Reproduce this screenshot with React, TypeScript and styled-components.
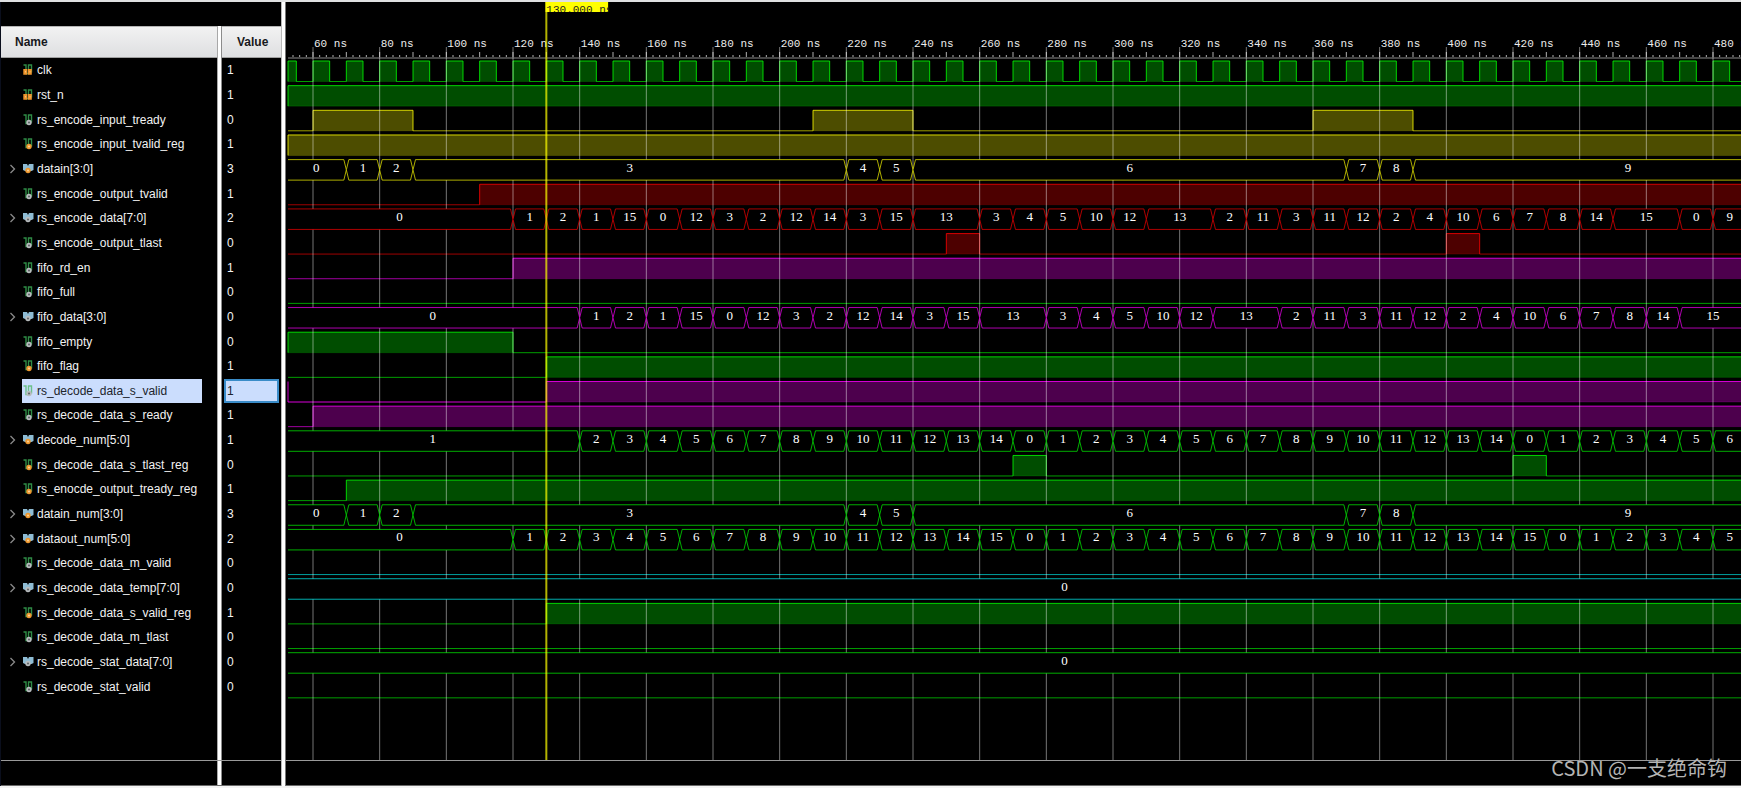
import React from "react";
import styled, { createGlobalStyle, css } from "styled-components";

const Global = createGlobalStyle`
  * { box-sizing: border-box; }
  body { margin: 0; background: #000; }
`;

/* ---------- signal data ---------- */

type Kind = "input" | "net" | "reg" | "busNet" | "busReg";
type Segment = [until: number, label: string];
type Signal = {
  name: string;
  value: string;
  kind: Kind;
  color: string;
  selected?: boolean;
  high?: [number, number][];
  bus?: Segment[];
};

const T_START = 52;
const T_END = 519;

const GREEN = "0,255,0";
const YELLOW = "255,255,0";
const RED = "255,0,0";
const MAGENTA = "255,0,255";
const CYAN = "0,255,255";

/* Consecutive 10 ns values; a repeated value is merged into one longer segment. */
const steps = (first: string, from: number, values: string): Segment[] => {
  const out: Segment[] = [[from, first]];
  let t = from;
  values.split(" ").forEach((v) => {
    t += 10;
    if (out[out.length - 1][1] === v) out[out.length - 1][0] = t;
    else out.push([t, v]);
  });
  return out;
};

const INPUT_WORDS: Segment[] = [
  [70, "0"], [80, "1"], [90, "2"], [220, "3"], [230, "4"], [240, "5"],
  [370, "6"], [380, "7"], [390, "8"], [T_END, "9"],
];
const CODE = "1 2 1 15 0 12 3 2 12 14 3 15 13 13 3 4 5 10 12 13 13 2 11 3 11 12 2 4 10 6 7 8 14 15 15";

const clock: [number, number][] = [[50, 55]];
for (let t = 60; t < T_END; t += 10) clock.push([t, t + 5]);

const SIGNALS: Signal[] = [
  { name: "clk", value: "1", kind: "input", color: GREEN, high: clock },
  { name: "rst_n", value: "1", kind: "input", color: GREEN, high: [[0, T_END]] },
  { name: "rs_encode_input_tready", value: "0", kind: "net", color: YELLOW, high: [[60, 90], [210, 240], [360, 390]] },
  { name: "rs_encode_input_tvalid_reg", value: "1", kind: "reg", color: YELLOW, high: [[0, T_END]] },
  { name: "datain[3:0]", value: "3", kind: "busReg", color: YELLOW, bus: INPUT_WORDS },
  { name: "rs_encode_output_tvalid", value: "1", kind: "net", color: RED, high: [[110, T_END]] },
  { name: "rs_encode_data[7:0]", value: "2", kind: "busNet", color: RED, bus: steps("0", 120, CODE + " 0 9") },
  { name: "rs_encode_output_tlast", value: "0", kind: "net", color: RED, high: [[250, 260], [400, 410]] },
  { name: "fifo_rd_en", value: "1", kind: "net", color: MAGENTA, high: [[120, T_END]] },
  { name: "fifo_full", value: "0", kind: "net", color: GREEN, high: [] },
  { name: "fifo_data[3:0]", value: "0", kind: "busNet", color: MAGENTA, bus: steps("0", 140, CODE) },
  { name: "fifo_empty", value: "0", kind: "net", color: GREEN, high: [[0, 120]] },
  { name: "fifo_flag", value: "1", kind: "reg", color: GREEN, high: [[130, T_END]] },
  { name: "rs_decode_data_s_valid", value: "1", kind: "net", color: MAGENTA, selected: true, high: [[130, T_END]] },
  { name: "rs_decode_data_s_ready", value: "1", kind: "net", color: MAGENTA, high: [[60, T_END]] },
  { name: "decode_num[5:0]", value: "1", kind: "busReg", color: GREEN, bus: steps("1", 140, "2 3 4 5 6 7 8 9 10 11 12 13 14 0 1 2 3 4 5 6 7 8 9 10 11 12 13 14 0 1 2 3 4 5 6") },
  { name: "rs_decode_data_s_tlast_reg", value: "0", kind: "reg", color: GREEN, high: [[270, 280], [420, 430]] },
  { name: "rs_enocde_output_tready_reg", value: "1", kind: "reg", color: GREEN, high: [[70, T_END]] },
  { name: "datain_num[3:0]", value: "3", kind: "busReg", color: GREEN, bus: INPUT_WORDS },
  { name: "dataout_num[5:0]", value: "2", kind: "busReg", color: GREEN, bus: steps("0", 120, "1 2 3 4 5 6 7 8 9 10 11 12 13 14 15 0 1 2 3 4 5 6 7 8 9 10 11 12 13 14 15 0 1 2 3 4 5") },
  { name: "rs_decode_data_m_valid", value: "0", kind: "net", color: CYAN, high: [] },
  { name: "rs_decode_data_temp[7:0]", value: "0", kind: "busNet", color: CYAN, bus: [[T_END, "0"]] },
  { name: "rs_decode_data_s_valid_reg", value: "1", kind: "reg", color: GREEN, high: [[130, T_END]] },
  { name: "rs_decode_data_m_tlast", value: "0", kind: "net", color: GREEN, high: [] },
  { name: "rs_decode_stat_data[7:0]", value: "0", kind: "busNet", color: GREEN, bus: [[T_END, "0"]] },
  { name: "rs_decode_stat_valid", value: "0", kind: "net", color: GREEN, high: [] },
];

/* ---------- geometry shared by the table and the waves ---------- */

const LIST_HEIGHT = 641;
const ROW = LIST_HEIGHT / SIGNALS.length;
const RULER = 56;
const NS = 10 / 3;
const LEFT = 2;
const xOf = (t: number) => Math.max(LEFT, 27 + (t - 60) * NS);

/* ---------- page ---------- */

const Page = styled.main`
  position: relative;
  display: flex;
  min-height: 100vh;
  background: #000;
  border-top: 2px solid #dfe0e1;
  border-bottom: 2px solid #f4f4f4;
  font: 12px/16px "Liberation Sans", Arial, sans-serif;
  color: #f2f2f2;
`;

const Sidebar = styled.section`
  flex: none;
  width: 281px;
  display: flex;
  flex-direction: column;
  padding-top: 24px;
  border-left: 1px solid #0a0e1c;
`;

const columnDivider = css`
  background: linear-gradient(
    to right,
    transparent 216px,
    #a8a8a8 216px 217px,
    #fff 217px 220px,
    #8c8c8c 220px 221px,
    transparent 221px
  );
`;

const TableArea = styled.div`
  flex: 1;
  ${columnDivider}
`;

const SignalTable = styled.table`
  display: block;
`;

const HeadRow = styled.tr`
  display: grid;
  grid-template-columns: 216px 59px;
  column-gap: 5px;
  height: 32px;
`;

const HeadGroup = styled.thead`
  display: block;
`;

const HeadCell = styled.th<{ $indent: number }>`
  display: flex;
  align-items: center;
  padding: 0 0 0 ${(p) => p.$indent}px;
  background: linear-gradient(#f2f2f2, #dedfe1);
  border-top: 1px solid #b4b4b4;
  border-bottom: 1px solid #a0a0a0;
  color: #16181c;
  font-weight: bold;
`;

const Rows = styled.tbody`
  display: grid;
  grid-template-rows: repeat(${SIGNALS.length}, 1fr);
  height: ${LIST_HEIGHT}px;
`;

const Row = styled.tr`
  display: grid;
  grid-template-columns: 21px 180px 55px;
  column-gap: 0;
`;

const ToggleCell = styled.td`
  display: flex;
  align-items: center;
  padding: 0 0 0 8px;
`;

const Toggle = styled.button`
  display: flex;
  padding: 0;
  border: 0;
  background: none;
  cursor: pointer;
`;

const NameCell = styled.td<{ $selected?: boolean }>`
  display: flex;
  align-items: center;
  gap: 3px;
  padding: 0 0 0 1px;
  white-space: nowrap;
  ${(p) => p.$selected && css`
    background: #cbddfd;
    color: #20242c;
  `}
`;

const ValueCell = styled.td<{ $selected?: boolean }>`
  display: flex;
  align-items: center;
  margin-left: 22px;
  width: 55px;
  padding: 0 0 0 3px;
  ${(p) => p.$selected && css`
    padding-left: 1px;
    background: #cbddfd;
    border: 2px solid #3a8cc8;
    color: #20242c;
  `}
`;

const Footer = styled.div`
  flex: none;
  height: 26px;
  border-top: 1px solid #9a9a9a;
  border-bottom: 1px solid #6a6a6a;
`;

const SidebarFooter = styled(Footer)`
  ${columnDivider}
`;

const Splitter = styled.div`
  flex: none;
  width: 5px;
  background: #fff;
  border-left: 1px solid #b8b8b8;
  border-right: 1px solid #777;
`;

const WavePanel = styled.section`
  flex: 1;
  min-width: 0;
  display: flex;
  flex-direction: column;
`;

const WaveArea = styled.div`
  flex: 1;
  min-height: ${RULER + LIST_HEIGHT + 60}px;
  display: grid;
  overflow: hidden;
`;

const Waves = styled.svg`
  display: block;
  width: 100%;
  height: 100%;
  min-width: 0;
`;

const RulerText = styled.text`
  font: 11px "Liberation Mono", "Courier New", monospace;
  fill: #ececec;
`;

const BusText = styled.text`
  font: 13px "Liberation Serif", "Times New Roman", serif;
  fill: #fff;
`;

const Watermark = styled.div`
  position: absolute;
  right: 14px;
  bottom: 5px;
  font: 20px/26px "Noto Sans CJK SC", sans-serif;
  color: #b4b4b4;
`;

/* ---------- icons ---------- */

const SignalIcon = ({ kind, selected }: { kind: Kind; selected?: boolean }) => {
  const green = selected ? "#6cc08a" : "#2f8c46";
  const bus = kind === "busNet" || kind === "busReg";
  const reg = kind === "reg" || kind === "busReg";
  const cy = bus ? 7 : 8;
  const cx = bus ? 5 : 6;
  return (
    <svg width="11" height="12" viewBox="0 0 11 12" aria-hidden="true">
      {bus ? (
        <path d="M0 1h4l1 2 1-2h4.500v6l-2 1H2L0 7z" fill="#8ebcd4" />
      ) : (
        <path d="M.5 1H3v8.500h2.500V1h3v7.500" fill="none" stroke={green} strokeWidth="1.400" />
      )}
      {kind === "input" && (
        <>
          <path d="M.3 5H4.200v5.700H.3zM4.800 5h4v5.700h-4z" fill="#ee952c" />
          <path d="M2 7h1v1.500H2zM6.500 7h1v1.500h-1z" fill="#f8c078" />
        </>
      )}
      {kind !== "input" && (
        <>
          <circle cx={cx} cy={cy + 0.5} r="2.700" fill={reg ? "#ee982f" : "#b8bcbe"} />
          <circle cx={cx} cy={cy + 0.5} r="1" fill={reg ? "#fcd49c" : "#5c6062"} />
        </>
      )}
    </svg>
  );
};

const Chevron = () => (
  <svg width="7" height="10" viewBox="0 0 7 10" aria-hidden="true">
    <path d="M1.500 1l4 4-4 4" fill="none" stroke="#8a8a8a" strokeWidth="1.300" />
  </svg>
);

/* ---------- waves ---------- */

const HIGH = 3;
const LOW = 23.5;
const MID = (HIGH + LOW) / 2;
const SLANT = 2.5;

/* The low level: every stretch between two high pulses. */
const lowPath = (high: [number, number][]) => {
  let d = "";
  let x = LEFT;
  high.forEach(([a, b]) => {
    d += `M${x} ${LOW}H${xOf(a)}`;
    x = xOf(b);
  });
  return d + `M${x} ${LOW}H${xOf(T_END)}`;
};

const BitWave = ({ signal }: { signal: Signal }) => {
  const high = signal.high ?? [];
  const c = signal.color;
  return (
    <g fill="none">
      <path d={lowPath(high)} stroke={`rgba(${c},${signal.selected ? 0.85 : 0.62})`} />
      {high.map(([a, b]) => (
        <g key={a}>
          <rect x={xOf(a)} y={HIGH} width={xOf(b) - xOf(a)} height={LOW - HIGH} fill={`rgba(${c},0.3)`} />
          <path d={`M${xOf(a)} ${LOW}V${HIGH}H${xOf(b)}V${LOW}`} stroke={`rgba(${c},0.8)`} />
          <path d={`M${xOf(a)} ${LOW}H${xOf(b)}`} stroke={`rgba(${c},0.15)`} />
        </g>
      ))}
      {signal.selected && <path d={`M${LEFT} ${HIGH}V${LOW}`} stroke={`rgba(${c},0.8)`} />}
    </g>
  );
};

const BusWave = ({ signal }: { signal: Signal }) => {
  let from = T_START;
  return (
    <g>
      {(signal.bus ?? []).map(([until, label]) => {
        const first = from === T_START;
        const a = first ? LEFT : xOf(from);
        const b = xOf(until);
        const center = ((first ? 0 : a) + b) / 2;
        const right = `H${b - SLANT}L${b} ${MID}L${b - SLANT} ${LOW}`;
        const d = first
          ? `M${a} ${HIGH}${right}H${a}`
          : `M${a} ${MID}L${a + SLANT} ${HIGH}${right}H${a + SLANT}Z`;
        from = until;
        return (
          <g key={until}>
            <path d={d} fill="#000" stroke={`rgba(${signal.color},0.68)`} />
            <BusText x={center} y={15} textAnchor="middle">{label}</BusText>
          </g>
        );
      })}
    </g>
  );
};

const range = (from: number, to: number, step: number) => {
  const out: number[] = [];
  for (let t = from; t <= to; t += step) out.push(t);
  return out;
};

const WaveChart = () => (
  <Waves role="img" aria-label="Simulation waveforms">
    {range(54, 500, 2).map((t) => (
      <path key={t} d={`M${xOf(t)} ${t % 10 === 0 ? 50 : 53}V55`} stroke="#b0b0b0" />
    ))}
    <line x1={LEFT} x2="100%" y1={RULER} y2={RULER} stroke="#8c8c8c" />
    {SIGNALS.map((s, i) => !s.bus && (
      <g key={s.name} transform={`translate(0 ${RULER + i * ROW})`}>
        <BitWave signal={s} />
      </g>
    ))}
    {range(60, 480, 20).map((t) => (
      <g key={t}>
        <line x1={xOf(t)} x2={xOf(t)} y1={45} y2="100%" stroke="#fff" strokeOpacity="0.46" />
        <RulerText x={xOf(t) + 1} y={45}>{t} ns</RulerText>
      </g>
    ))}
    {SIGNALS.map((s, i) => s.bus && (
      <g key={s.name} transform={`translate(0 ${RULER + i * ROW})`}>
        <BusWave signal={s} />
      </g>
    ))}
    <line x1={xOf(130)} x2={xOf(130)} y1={0} y2="100%" stroke="#ff0" strokeWidth="2" strokeOpacity="0.7" />
    <svg x={xOf(130) - 1} y={0} width={63} height={10}>
      <rect width="100%" height="100%" fill="#ff0" />
      <RulerText x={1} y={11} style={{ fill: "#222" }}>130.000 ns</RulerText>
    </svg>
  </Waves>
);

/* ---------- app ---------- */

export default function App() {
  return (
    <>
      <Global />
      <Page>
        <Sidebar>
          <TableArea>
            <SignalTable>
              <HeadGroup>
                <HeadRow>
                  <HeadCell $indent={14} scope="col">Name</HeadCell>
                  <HeadCell $indent={15} scope="col">Value</HeadCell>
                </HeadRow>
              </HeadGroup>
              <Rows>
                {SIGNALS.map((s) => (
                  <Row key={s.name}>
                    <ToggleCell>
                      {s.bus && (
                        <Toggle type="button" aria-label={`Expand ${s.name}`}>
                          <Chevron />
                        </Toggle>
                      )}
                    </ToggleCell>
                    <NameCell $selected={s.selected}>
                      <SignalIcon kind={s.kind} selected={s.selected} />
                      {s.name}
                    </NameCell>
                    <ValueCell $selected={s.selected}>{s.value}</ValueCell>
                  </Row>
                ))}
              </Rows>
            </SignalTable>
          </TableArea>
          <SidebarFooter />
        </Sidebar>
        <Splitter />
        <WavePanel>
          <WaveArea>
            <WaveChart />
          </WaveArea>
          <Footer />
        </WavePanel>
        <Watermark>CSDN @一支绝命钩</Watermark>
      </Page>
    </>
  );
}
